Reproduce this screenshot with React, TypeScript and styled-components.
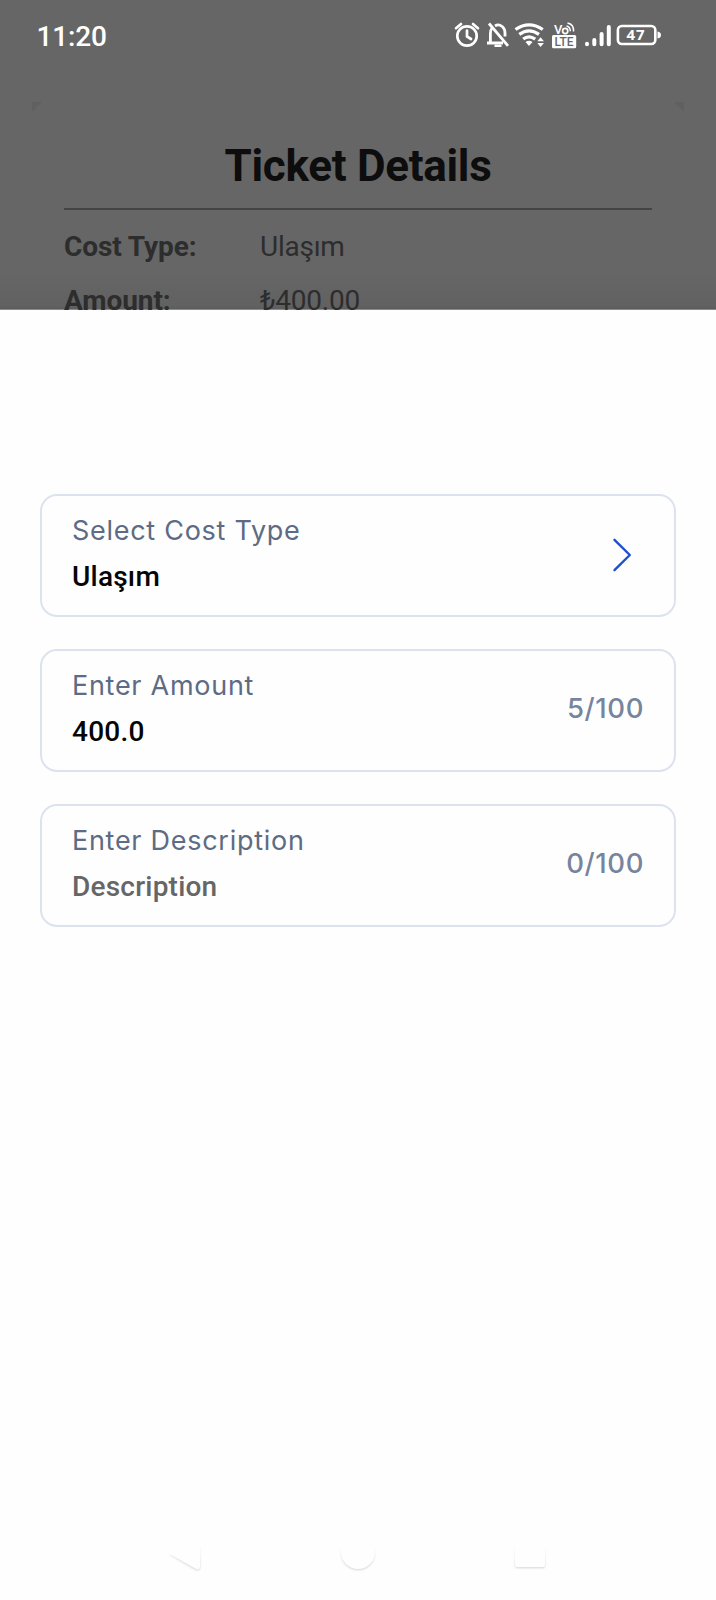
import React from 'react';
import styled, { createGlobalStyle } from 'styled-components';

const GlobalStyle = createGlobalStyle`
  * { box-sizing: border-box; }
  body { margin: 0; background: #666666; }
`;

const Screen = styled.div`
  width: 716px;
  height: 1600px;
  display: flex;
  flex-direction: column;
  overflow: hidden;
  background: #666666;
  font-family: Roboto, sans-serif;
`;

const Backdrop = styled.div`
  height: 310px;
  flex: none;
  overflow: hidden;
  background: linear-gradient(#666666 0, #666666 272px, #616161 306px, #5c5c5c 309px, #8a8a8a 309px);
`;

const StatusBar = styled.header`
  height: 72px;
  display: flex;
  justify-content: space-between;
  padding-left: 36.5px;
  padding-right: 54px;
  color: #ffffff;
`;

const Clock = styled.span`
  font-size: 28px;
  font-weight: 500;
  line-height: 73px;
  letter-spacing: -0.15px;
`;

const StatusIcons = styled.div`
  display: flex;
  align-items: flex-start;
  padding-top: 20px;

  svg { display: block; }
`;

const Ticket = styled.section`
  margin: 30px 32px 0;
  padding: 32px 32px 0;
  height: 300px;
  background:
    radial-gradient(circle at 14px 14px, transparent 12px, #606060 14px) 0 0 / 9px 9px no-repeat,
    radial-gradient(circle at -5px 14px, transparent 12px, #606060 14px) 100% 0 / 9px 9px no-repeat;
`;

const Title = styled.h1`
  margin: 0;
  height: 74px;
  font-size: 44px;
  font-weight: 700;
  line-height: 64px;
  letter-spacing: -0.3px;
  text-align: center;
  color: #0d0d0d;
`;

const Divider = styled.hr`
  margin: 0 0 10px;
  height: 2px;
  border: 0;
  background: #444444;
`;

const DetailRow = styled.div`
  display: grid;
  grid-template-columns: 196px 1fr;
  height: 54px;
  font-size: 28px;
  line-height: 54px;
  color: #2d2d2d;
`;

const DetailName = styled.span`
  font-weight: 700;
  letter-spacing: -0.08px;
`;

const DetailValue = styled.span`
  font-weight: 400;
  letter-spacing: -0.25px;
`;

const Sheet = styled.main`
  flex: 1;
  display: flex;
  flex-direction: column;
  justify-content: space-between;
  padding: 184px 40px 0;
  background: #fefefe;
`;

const Fields = styled.div`
  display: flex;
  flex-direction: column;
  gap: 32px;
`;

const Field = styled.div`
  height: 123px;
  display: flex;
  justify-content: space-between;
  align-items: center;
  padding: 0 30px;
  border: 2px solid #dce3ee;
  border-radius: 17px;
`;

const FieldText = styled.div`
  display: flex;
  flex-direction: column;
  padding-bottom: 3px;
`;

const Label = styled.span`
  font-family: Inter, sans-serif;
  font-size: 27px;
  line-height: 46px;
  letter-spacing: 0.72px;
  color: #5d6b84;
`;

const Value = styled.span<{ $muted?: boolean }>`
  font-size: 28px;
  font-weight: 500;
  line-height: 46px;
  letter-spacing: 0.22px;
  color: ${({ $muted }) => ($muted ? '#666666' : '#050505')};
`;

const Counter = styled.span`
  padding-bottom: 6px;
  font-family: Inter, sans-serif;
  font-size: 27.5px;
  font-weight: 450;
  letter-spacing: 0.6px;
  color: #76859d;
`;

const Chevron = styled.svg`
  margin-right: 11px;
  margin-bottom: 2px;
`;

const NavBar = styled.nav`
  display: flex;
  justify-content: space-between;
  padding: 0 128px 22px 124px;

  svg {
    filter: drop-shadow(0 1.5px 1px rgba(0, 0, 0, 0.16));
    mask-image: linear-gradient(transparent 15%, #000 65%);
  }
`;

const Alarm = () => (
  <svg width="32" height="32" viewBox="451 20 32 32" fill="none" stroke="#fff" strokeWidth="2.7" strokeLinecap="round">
    <circle cx="467" cy="36" r="9.7" />
    <path d="M467 30.5V36.5L471 39M456 28.2L461 24M473 24L478 28.2" />
  </svg>
);

const BellOff = () => (
  <svg width="30" height="32" viewBox="483 20 30 32" fill="none" stroke="#fff" strokeWidth="2.8">
    <path d="M490.4 43V33.5Q490.4 30 492 28M495 26Q497.5 24.3 500 25.3Q505 27.4 505 33V36.5" />
    <path d="M487 43H503M489 23.5L508 45.8" />
    <path d="M494.5 45.8H501.5" strokeWidth="2.4" />
  </svg>
);

const Wifi = () => (
  <svg width="36" height="32" viewBox="513 20 36 32" fill="none" stroke="#fff" strokeWidth="3.2">
    <path d="M515.5 29.5Q529 20.3 542.8 29.5M519.3 34.4Q529 27.4 539 34.4M523.2 39.1Q529 34.6 535.2 39.1" />
    <path d="M525.5 42Q529 39.7 532.5 42L529 46Z" fill="#fff" stroke="none" />
    <path d="M537.3 41.2L540.6 37.2L543.9 41.2ZM537.3 43L540.6 47L543.9 43Z" fill="#fff" stroke="none" />
  </svg>
);

const VoLte = () => (
  <svg width="32" height="32" viewBox="549 20 32 32">
    <text x="554" y="33.8" fill="#fff" fontFamily="Roboto" fontSize="13" fontWeight="500">V</text>
    <g fill="none" stroke="#fff">
      <circle cx="565.2" cy="31" r="2.6" strokeWidth="1.7" />
      <path d="M566.5 26Q570.3 26.8 570.3 31.3M567.5 23Q574 24.2 573.6 31.5" strokeWidth="1.5" />
    </g>
    <rect x="552" y="35" width="24.2" height="13.2" rx="1.5" fill="#fff" />
    <text x="554.6" y="46" fill="#666" fontFamily="Roboto" fontSize="12" fontWeight="500" textLength="19" lengthAdjust="spacingAndGlyphs">LTE</text>
  </svg>
);

const Signal = () => (
  <svg width="32" height="32" viewBox="581 20 32 32" stroke="#fff" strokeWidth="4" strokeLinecap="round">
    <path d="M587 44.2V43.8M594.3 44.2V40M601.6 44.2V34M608.8 44.2V27" />
  </svg>
);

const Battery = () => (
  <svg width="49" height="32" viewBox="613 20 49 32">
    <rect x="617.9" y="26" width="37.4" height="18" rx="4" fill="none" stroke="#fff" strokeWidth="2.6" />
    <path d="M657.5 31.5Q661 32 661 35Q661 38 657.5 38.5Z" fill="#fff" />
    <text x="626.5" y="40.3" fill="#fff" fontFamily="Open Sans" fontSize="15" fontWeight="700" textLength="18">47</text>
  </svg>
);

const fields = [
  { label: 'Select Cost Type', value: 'Ulaşım' },
  { label: 'Enter Amount', value: '400.0', count: '5/100' },
  { label: 'Enter Description', value: 'Description', count: '0/100', muted: true },
];

export default function App() {
  return (
    <Screen>
      <GlobalStyle />
      <Backdrop>
        <StatusBar>
          <Clock>11:20</Clock>
          <StatusIcons>
            <Alarm />
            <BellOff />
            <Wifi />
            <VoLte />
            <Signal />
            <Battery />
          </StatusIcons>
        </StatusBar>
        <Ticket>
          <Title>Ticket Details</Title>
          <Divider />
          <DetailRow>
            <DetailName>Cost Type:</DetailName>
            <DetailValue>Ulaşım</DetailValue>
          </DetailRow>
          <DetailRow>
            <DetailName>Amount:</DetailName>
            <DetailValue>₺400.00</DetailValue>
          </DetailRow>
        </Ticket>
      </Backdrop>
      <Sheet>
        <Fields>
          {fields.map((f) => (
            <Field key={f.label}>
              <FieldText>
                <Label>{f.label}</Label>
                <Value $muted={f.muted}>{f.value}</Value>
              </FieldText>
              {f.count ? (
                <Counter>{f.count}</Counter>
              ) : (
                <Chevron width="24" height="36" viewBox="0 0 24 36" fill="none" stroke="#1d4fd0" strokeWidth="2.4" strokeLinecap="round" strokeLinejoin="round">
                  <path d="M5.5 2.8L20.8 18L5.5 33.2" />
                </Chevron>
              )}
            </Field>
          ))}
        </Fields>
        <NavBar>
          <svg width="40" height="40" viewBox="0 0 40 40" fill="#fefefe">
            <path d="M5 15.5L32 1Q36 0 36 3V28Q36 32 32 31Z" />
          </svg>
          <svg width="40" height="40" viewBox="0 0 40 40" fill="#fefefe">
            <circle cx="22" cy="14" r="17" />
          </svg>
          <svg width="40" height="40" viewBox="0 0 40 40" fill="#fefefe">
            <rect x="7" y="1" width="30" height="28" rx="2" />
          </svg>
        </NavBar>
      </Sheet>
    </Screen>
  );
}
